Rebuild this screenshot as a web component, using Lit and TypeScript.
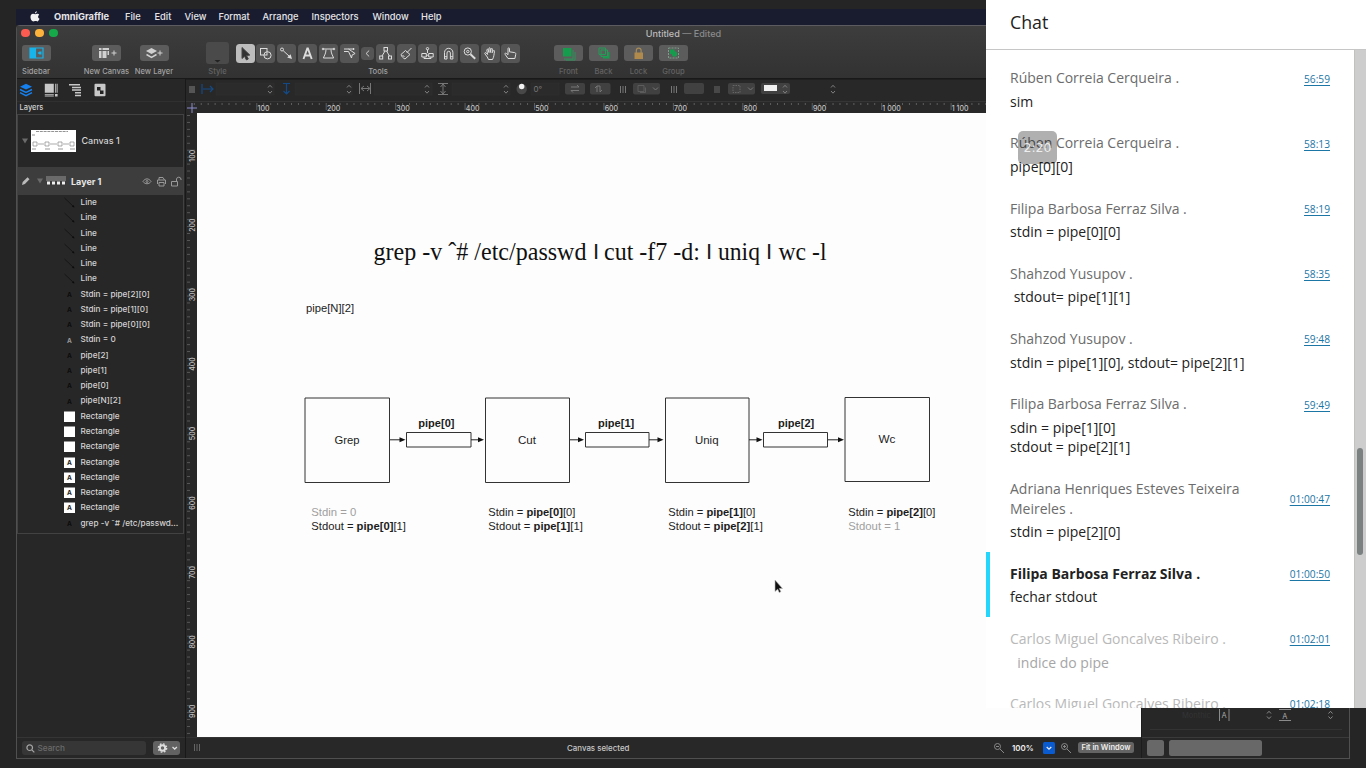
import { LitElement, html, svg, css } from "lit";
import { customElement } from "lit/decorators.js";
import { classMap } from "lit/directives/class-map.js";

const MENUS = ["File", "Edit", "View", "Format", "Arrange", "Inspectors", "Window", "Help"];

/* Drawing tools, each on a 19x19 grid */
const TOOLS = [
  svg`<path d="M6 3.5v11l2.6-2.2 1.8 3.6 1.9-.9-1.8-3.5 3.3-.4z" fill="#333"/>`,
  svg`<rect x="4.500" y="4.500" width="6.500" height="6.500"/><circle cx="11.500" cy="11.300" r="3.600"/>`,
  svg`<circle cx="5" cy="5.500" r="1.500"/><path d="M6.200 6.700L12 12"/><path d="M15 15l-4.800-1.400 3.400-3.400z" fill="#ddd" stroke="none"/>`,
  svg`<path d="M5.500 15L9.300 4.500h.6L13.700 15M7 11.500h5.200" stroke-width="1.900"/>`,
  svg`<path d="M4 5h11M7 5.500c0 4-1.500 5.500-2.600 8.500h10.200c-1.100-3-2.600-4.500-2.600-8.500"/><circle cx="4" cy="5" r=".8"/><circle cx="15" cy="5" r=".8"/>`,
  svg`<path d="M4 5h10.500M4 7.500h4.500l3 6.500.6-3 3-1.500-6.600-4.500M13.500 4v2" />`,
  svg`<path d="M8.300 3.800L5 7l3.300 3.200"/>`,
  svg`<rect x="8" y="3.500" width="3.500" height="3.500"/><rect x="3.700" y="12" width="3" height="3"/><rect x="12.500" y="12" width="3" height="3"/><path d="M9 7l-3 5M10.500 7l3 5"/>`,
  svg`<path d="M14.500 4l-4.500 4.500M8.500 6.500l4.500 4-5 4.500c-2-1-3.500-2.500-4-4.500zM5.500 11l2 2"/>`,
  svg`<path d="M9.500 9V5.500M3.800 9.500h4.500v3.500H3.800zM10.700 9.500h4.500v3.500h-4.500zM8.300 11.200h2.400"/><circle cx="9.500" cy="4.700" r="1.200"/><path d="M6 13v1.500h7V13"/>`,
  svg`<path d="M5.500 15V8.500a4.200 4.200 0 018.400 0V15h-2.500V9a1.700 1.700 0 00-3.400 0v6zM5.500 12.700H8M11.400 12.700h2.500"/>`,
  svg`<circle cx="7.800" cy="7.500" r="3.600"/><circle cx="7.800" cy="7.500" r="1.200"/><path d="M10.500 10.200l4.700 4.600" stroke-width="1.900"/>`,
  svg`<path d="M6.300 13L3.800 9.700c-.4-1 .7-1.500 1.400-.7l1.400 1.500-.8-4.500c0-1 1.200-1.100 1.400-.2l.7 2.700V4.500c0-1 1.400-1 1.400 0v4l.8-3.500c.2-.9 1.500-.7 1.400.3l-.4 3.500 1.100-2c.4-.8 1.500-.4 1.300.5-.5 2.500-.3 5.200-2 8.200H7.500z"/>`,
  svg`<path d="M7 14.500l-3-4.300c-.4-.8.6-1.500 1.300-.8l1.700 1.300V4.600c0-1 1.500-1 1.500 0v3.200l5.200.8c1 .2 1.200 1 1 2l-.8 3.900z"/>`,
];

const layerRows: Array<[string, string]> = [
  ...Array.from({ length: 6 }, () => ["line", "Line"] as [string, string]),
  ["text", "Stdin = pipe[2][0]"],
  ["text", "Stdin = pipe[1][0]"],
  ["text", "Stdin = pipe[0][0]"],
  ["pale", "Stdin = 0"],
  ["text", "pipe[2]"],
  ["text", "pipe[1]"],
  ["text", "pipe[0]"],
  ["text", "pipe[N][2]"],
  ["box", "Rectangle"],
  ["box", "Rectangle"],
  ["box", "Rectangle"],
  ["boxa", "Rectangle"],
  ["boxa", "Rectangle"],
  ["boxa", "Rectangle"],
  ["boxa", "Rectangle"],
  ["text", "grep -v ˆ# /etc/passwd..."],
];

@customElement("mac-toolbar")
class MacToolbar extends LitElement {
  static styles = css`
    :host { display: block; height: 53px; background: linear-gradient(#3d3d3d, #323232); border-top: 1px solid #5b5b60; box-sizing: border-box; font: 500 7.600px Inter, sans-serif; color: #a2a2a2; }
    .title { display: grid; grid-template-columns: 61px 1fr 60px; height: 14px; align-items: center; font-size: 9.100px; color: #8b8b8b; }
    .title p { margin: 0; text-align: center; }
    .title b { font-weight: 500; color: #bdbdbd; }
    .lights { display: flex; gap: 5.400px; padding-left: 4.200px; }
    .lights i { width: 8.600px; height: 8.600px; border-radius: 50%; }
    .red { background: #fc5b52; } .yellow { background: #fdb23c; } .green { background: #16a94a; }
    .row { display: flex; height: 38px; }
    .item { display: flex; flex-direction: column; align-items: center; width: 35px; }
    .item span { line-height: 10px; white-space: nowrap; margin-top: 1px; }
    .face { height: 26px; display: flex; align-items: center; justify-content: center; }
    .btn { width: 29px; height: 16px; border-radius: 3px; background: #5c5c5c; display: block; }
    .well { width: 23px; height: 22px; border-radius: 3px; background: #4a4a4a; display: block; }
    .dim { color: #636363; }
    .sidebar { width: 38px; } .canvas { width: 47px; margin-left: 28px; } .layer { width: 47px; margin-left: .5px; }
    .style { margin-left: 22.500px; } .tools { width: 284px; margin-left: 1px; } .front { margin-left: 31px; }
    .strip { width: 285px; display: flex; justify-content: space-between; align-items: center; height: 26px; }
    .tool { width: 19px; height: 19px; border-radius: 3.500px; background: #555556; fill: none; stroke: #dcdcdc; stroke-width: 1; }
    .active { background: #bdbdbd; stroke: #444; }
    .small { width: 13px; height: 13px; }
  `;
  render() {
    return html`
      <div class="title">
        <div class="lights"><i class="red"></i><i class="yellow"></i><i class="green"></i></div>
        <p><b>Untitled</b> — Edited</p>
      </div>
      <div class="row">
        <div class="item sidebar"><div class="face"><svg class="btn" viewBox="0 0 29 16"><path d="M8 3h5v10H8z" fill="#17b4ea"/><path d="M8 3h13v10H8zM13.500 3v10" fill="none" stroke="#17b4ea" stroke-width="1.200"/><path d="M17.500 6.500h2v3h-2l-2-1.500z" fill="#17b4ea"/></svg></div><span>Sidebar</span></div>
        <div class="item canvas"><div class="face"><svg class="btn" viewBox="0 0 29 16"><path d="M7 3h2.500v2H7zM10.500 3H17v2h-6.500zM7 6h2.500v7H7zM10.500 6h4v7h-4zM15.500 6H17v4h-1.500z" fill="#d0d0d0"/><path d="M19.500 8h5M22 5.500v5" stroke="#d0d0d0"/></svg></div><span>New Canvas</span></div>
        <div class="item layer"><div class="face"><svg class="btn" viewBox="0 0 29 16"><path d="M11.500 3l5.500 3-5.500 3L6 6z" fill="#d0d0d0"/><path d="M6.500 9.500l5 2.800 5-2.800" fill="none" stroke="#d0d0d0" stroke-width="1.500"/><path d="M17.500 8h5M20 5.500v5" stroke="#d0d0d0"/></svg></div><span>New Layer</span></div>
        <div class="item style dim"><div class="face"><svg class="well" viewBox="0 0 23 22"><path d="M8.500 18h6l-3 2.500z" fill="#222"/></svg></div><span>Style</span></div>
        <div class="item tools"><div class="strip">
          ${TOOLS.map((t, i) => html`<svg class=${classMap({ tool: true, active: i === 0, small: i === 6 })} viewBox=${i === 6 ? "0 0 13 14" : "0 0 19 19"}>${t}</svg>`)}
        </div><span>Tools</span></div>
        <div class="item front dim"><div class="face"><svg class="btn" viewBox="0 0 29 16"><path d="M19 5v9h-9M21 7v8h-9" fill="none" stroke="#2b9358"/><path d="M9 3h8.500v8.500H9z" fill="#169c4d"/></svg></div><span>Front</span></div>
        <div class="item dim"><div class="face"><svg class="btn" viewBox="0 0 29 16"><path d="M14 7h6.500v6.500H14z" fill="#169c4d"/><path d="M12 5h6.500v6.500H12zM10 3h6.500v6.500H10z" fill="#5c5c5c" stroke="#239c57"/></svg></div><span>Back</span></div>
        <div class="item dim"><div class="face"><svg class="btn" viewBox="0 0 29 16"><path d="M10.500 7.500h8.500V14h-8.500z" fill="#b08a4c"/><path d="M12.300 8V5.500a2.400 2.400 0 014.800 0V8" fill="none" stroke="#a78a5a" stroke-width="1.200"/></svg></div><span>Lock</span></div>
        <div class="item dim"><div class="face"><svg class="btn" viewBox="0 0 29 16"><path d="M9.500 3h10v10h-10z" fill="none" stroke="#7a9c88" stroke-dasharray="2 1"/><path d="M11 4.500h4.500V9H11z" fill="#169c4d"/><circle cx="15.500" cy="9" r="2.700" fill="#169c4d"/></svg></div><span>Group</span></div>
      </div>`;
  }
}

@customElement("layer-sidebar")
class LayerSidebar extends LitElement {
  static styles = css`
    :host { display: flex; flex-direction: column; background: #272727; border-right: 1px solid #191919; box-sizing: border-box; font: 500 8.200px Inter, sans-serif; color: #d2d2d2; }
    .tabs { height: 21px; display: flex; align-items: center; gap: 10.500px; padding: 0 0 1px 2px; }
    .tabs svg { width: 14px; height: 14px; }
    .heading { height: 13px; line-height: 12px; padding-left: 2.500px; border-top: 1px solid #303030; box-sizing: border-box; font-size: 7.500px; }
    .list { border: 1px solid #424242; height: 420px; box-sizing: border-box; margin-right: 1px; }
    .canvas { height: 52px; display: flex; align-items: center; padding: 0 0 1px 4px; box-sizing: border-box; font-size: 9px; }
    .canvas .thumb { width: 45px; height: 22px; margin: 0 5.500px 0 3px; }
    .arrow { width: 6px; height: 6px; fill: #6b6b6b; }
    .layer { height: 28px; display: flex; align-items: center; background: #3d3d3d; padding-left: 3px; font-size: 9px; font-weight: 700; color: #e6e6e6; }
    .pencil { width: 10px; height: 10px; margin-right: 6px; }
    .mini { width: 20px; height: 10px; margin: 0 5.500px 0 2.500px; }
    .flags { width: 40px; height: 11px; margin-left: auto; margin-right: 1px; }
    .row { height: 15.270px; display: flex; align-items: center; padding-left: 46px; white-space: nowrap; }
    .row svg { width: 11px; height: 11px; margin-right: 5.500px; }
    .row span { margin-top: -1.200px; }
    .grow { flex: 1; }
    .foot { height: 22px; border-top: 1px solid #353535; box-sizing: border-box; display: flex; align-items: center; padding: 0 5px 1px 4.500px; gap: 7px; }
    .search { width: 124px; height: 14px; border-radius: 3px; background: #363636; display: flex; align-items: center; gap: 3px; color: #6b6b6b; }
    .search svg { width: 9px; height: 9px; margin-left: 4px; }
    .gear { width: 27px; height: 14px; border-radius: 3px; background: #626262; }
  `;
  glyph(kind: string) {
    if (kind === "line") return svg`<path d="M.5 1l9 8.500" stroke="#161616"/><path d="M10.500 10.500l-2.600-.8 1.700-1.700z" fill="#0c0c0c"/>`;
    const boxed = kind.startsWith("box");
    return svg`${boxed ? svg`<rect y=".5" width="11" height="10.500" fill="#fff"/>` : ""}
      ${kind === "box" ? "" : svg`<text x="5.500" y="8" text-anchor="middle" font-size="6.500" font-weight="700" fill=${kind === "pale" ? "#999" : boxed ? "#222" : "#0c0c0c"}>A</text>`}`;
  }
  render() {
    return html`
      <div class="tabs">
        <svg viewBox="0 0 14 14" fill="#1680ee"><path d="M7 .8l6 2.900-6 2.900-6-2.900z"/><path d="M1 6.500l6 2.900 6-2.900M1 9.600l6 3 6-3" fill="none" stroke="#1680ee" stroke-width="1.500"/></svg>
        <svg viewBox="0 0 14 14" fill="#c8c8c8"><path d="M.8.8h9v9h-9zM11 .8h.8v9H11zM12.600.8h1v9h-1zM.8 11h9v.8h-9zM.8 12.600h9v1h-9zM11 11h2.600v2.600H11z"/></svg>
        <svg viewBox="0 0 14 14" fill="#c8c8c8"><path d="M1 1h11v1.500H1zM4 3.700h9v1.500H4zM4 6.300h9v1.500H4zM7 9h6v1.500H7zM7 11.800h6v1.500H7z"/></svg>
        <svg viewBox="0 0 14 14"><rect x="1.500" y=".8" width="11" height="12.500" rx="1" fill="#c8c8c8"/><path d="M4 4h3.500v3.500H4zM7 7.500h3.500V11H7z" fill="#222"/></svg>
      </div>
      <div class="heading">Layers</div>
      <div class="list">
        <div class="canvas">
          <svg class="arrow" viewBox="0 0 6 6"><path d="M0 .5h6L3 5.500z"/></svg>
          <svg class="thumb" viewBox="0 0 45 22"><path d="M0 0h45v22H0z" fill="#fff"/><path d="M5 1.500h32M1 5h3" stroke="#777" stroke-width=".8" stroke-dasharray="3 .8"/><path d="M2 12h4v4H2zM14 12h4v4h-4zM27 12h4v4h-4zM39 12h4v4h-4zM7 14h6M19 14h7M32 14h6" fill="none" stroke="#888" stroke-width=".7"/><path d="M1 19h4M14 19h5M27 19h5M39 19h5" stroke="#999"/></svg>
          Canvas 1
        </div>
        <div class="layer">
          <svg class="pencil" viewBox="0 0 10 10"><path d="M1 9l.7-3L6.500 1.200l2 2L3.900 8z" fill="#bbb"/></svg>
          <svg class="arrow" viewBox="0 0 6 6"><path d="M0 .5h6L3 5.500z"/></svg>
          <svg class="mini" viewBox="0 0 20 10"><path d="M0 0h20v5H0z" fill="#6a6a6a"/><path d="M0 5h20v4.500H0z" fill="#3a3a3a"/><path d="M1 5.500h3v3H1zM6 5.500h3v3H6zM11 5.500h3v3h-3zM16 5.500h3v3h-3z" fill="#eee"/></svg>
          Layer 1
          <svg class="flags" viewBox="0 0 40 11" fill="none" stroke="#999"><path d="M1 5.500c2-3.500 6-3.500 8 0-2 3-6 3-8 0z"/><circle cx="5" cy="5.500" r="1"/><path d="M17 4V1.500h4l1.500 2.500M15.500 8V4h8v4M17 6.500h5v3.500h-5z"/><path d="M29.500 5.500h6v4.500h-6zM34.500 5.500V3a2.300 2.300 0 014.500 0v1"/></svg>
        </div>
        ${layerRows.map(([kind, label]) => html`<div class="row"><svg viewBox="0 0 11 11">${this.glyph(kind)}</svg><span>${label}</span></div>`)}
      </div>
      <div class="grow"></div>
      <div class="foot">
        <div class="search"><svg viewBox="0 0 9 9" fill="none" stroke="#a5a5a5" stroke-width="1.200"><circle cx="3.700" cy="3.700" r="2.800"/><path d="M5.800 5.800L8.300 8.300"/></svg>Search</div>
        <svg class="gear" viewBox="0 0 27 14"><circle cx="9.500" cy="7" r="2.700" fill="none" stroke="#ddd" stroke-width="2"/><circle cx="9.500" cy="7" r="4.200" fill="none" stroke="#ddd" stroke-width="1.300" stroke-dasharray="1.700 1.600"/><path d="M19.500 6l2.200 2 2.200-2" fill="none" stroke="#ddd" stroke-width="1.300"/></svg>
      </div>`;
  }
}

const UNIT = 69.43;
const stepper = (x: number) => svg`<path d=${`M${x - 2} 87.500l2-2.200 2 2.200M${x - 2} 91l2 2.200 2-2.200`} fill="none" stroke="#808080"/>`;
const field = (x: number, w: number) => svg`<rect x=${x} y="83" width=${w} height="12" fill="#2b2b2b" stroke="#303030" stroke-width=".6"/>`;

@customElement("graffle-canvas")
class GraffleCanvas extends LitElement {
  static styles = css`
    :host { display: grid; grid-template: 22px 12px 1fr 22px / 11px 1fr; background: #282828; font-family: Inter, sans-serif; }
    svg { display: block; width: 100%; height: 100%; }
    .inspector { grid-column: 1 / 3; }
    .hruler { grid-column: 1 / 3; }
    .sheet { background: #fdfdfd; }
    .sans { font-family: "Liberation Sans", Arial, sans-serif; font-size: 11.200px; fill: #1c1c1c; }
    .serif { font-family: "Liberation Serif", Times, serif; font-size: 24.500px; fill: #111; }
    .bar { font-family: "Liberation Sans", Arial, sans-serif; font-size: 16.500px; font-weight: 700; fill: #1c1c1c; }
    .mute { fill: #a0a0a0; }
    .b { font-weight: 700; }
    .rule { font-size: 7px; font-weight: 500; fill: #c4c4c4; }
    .status { grid-column: 1 / 3; display: grid; grid-template-columns: 371px 1fr 31px 12px 5px 12px 6px 56px 7px; align-items: center; font-size: 7.900px; font-weight: 500; color: #c9c9c9; border-top: 1px solid #333; box-sizing: border-box; white-space: nowrap; padding-bottom: 1.500px; }
    .status svg { width: 12px; height: 12px; }
    .status .grip { margin-left: 7px; width: 8px; }
    .sel { display: flex; justify-content: space-between; padding: 0 7px 0 10px; align-items: center; }
    .pct { color: #eee; font-weight: 600; }
    .in { grid-column: 6; }
    .fit { grid-column: 8; background: #646464; border-radius: 2.500px; height: 11px; line-height: 11px; text-align: center; color: #eee; font-weight: 600; font-size: 7.500px; }
  `;
  arrow(x1: number, x2: number) {
    return svg`<path d=${`M${x1} 439.800H${x2 - 5}`} stroke="#222"/><path d=${`M${x2} 439.800l-6-2.500v5z`} fill="#111"/>`;
  }
  io(x: number, y: number, name: string, bold: string, tail: string, w: number) {
    return svg`<text class="sans" x=${x} y=${y} textLength=${w} lengthAdjust="spacingAndGlyphs">${name} = <tspan class="b">${bold}</tspan>${tail}</text>`;
  }
  word(x: number, y: number, w: number, t: string, cls = "sans") {
    return svg`<text class=${cls} x=${x} y=${y} textLength=${w} lengthAdjust="spacingAndGlyphs">${t}</text>`;
  }
  render() {
    const hTicks = Array.from({ length: 136 }, (_, i) => 194.300 + (i * UNIT) / 10);
    const vTicks = Array.from({ length: 90 }, (_, i) => 115.500 + (i * UNIT) / 10);
    const hundreds = Array.from({ length: 11 }, (_, i) => i + 1);
    return html`
      <svg class="inspector" viewBox="186 79 955 22">
        <path d="M186 79.500h955" stroke="#1f1f1f"/>
        <path d="M189 86h6v7h-6z" fill="#555"/>
        <path d="M202 84v10M203 89h10M210 86l3 3-3 3M283 83.500h7M286.500 84v10M283.500 91l3 3 3-3" fill="none" stroke="#134a86" stroke-width="1.200"/>
        ${[[216, 58], [295, 57], [374, 58], [452, 58]].map(([x, w]) => field(x, w))}
        ${[270, 349, 427, 506, 833].map(stepper)}
        <path d="M359.500 83v11M370.500 83v11M361 88.500h8M364 86l-3 2.500 3 2.500M367 86l3 2.500-3 2.500M438 83.500h10M438 94.500h10M443 84v10M440.500 87l2.500-3 2.500 3M440.500 91l2.500 3 2.500-3" fill="none" stroke="#777"/>
        <circle cx="521.700" cy="89" r="5.200" fill="#484848"/><circle cx="521.700" cy="86.500" r="2.700" fill="#f3f3f3"/>
        ${field(531, 28)}<text x="533.500" y="92" font-size="8" fill="#777">0°</text>
        <g fill="#414141"><rect x="565" y="83" width="20" height="11.500" rx="2"/><rect x="590" y="83" width="20.500" height="11.500" rx="2"/><rect x="633" y="83" width="27" height="11.500" rx="2"/><rect x="684" y="83" width="20" height="11" rx="2"/><rect x="728" y="83" width="27" height="11.500" rx="2"/><rect x="761" y="83" width="29" height="11" rx="2"/></g>
        <path d="M571 87h8l-2-2M579 90.500h-8l2 2M597 92v-6l-2 2M597 86h3v6l2-2" fill="none" stroke="#777"/><path d="M638 85.500h6v6h-6zM640 92.500h5.500v-5" fill="none" stroke="#5c5c5c"/>
        <path d="M620.500 86v7M623 86v7M625.500 86v7M671.500 86v7M674 86v7M676.500 86v7" stroke="#777"/>
        <path d="M653 87.500l2.500 2.500 2.500-2.500M748 87.500l2.500 2.500 2.500-2.500" fill="none" stroke="#777"/>
        <path d="M714 86h6v7h-6z" fill="#484848"/><path d="M733 85.500h7v7h-7z" fill="none" stroke="#666" stroke-dasharray="1.500 1"/>
        <path d="M764 85h13v6h-13z" fill="#f0f0f0"/>${stepper(785)}
      </svg>
      <svg class="hruler" viewBox="186 101 955 12">
        <path d="M186 101h955v12H186z" fill="#292929"/><path d="M186 101.500h955" stroke="#353535"/>
        ${hTicks.map((x, i) => svg`<path d=${`M${x} 103v${i % 10 === 9 ? 7 : 2}`} stroke="#646464" stroke-width=".9"/>`)}
        ${hundreds.map((n) => svg`<text class="rule" x=${257.500 + (n - 1) * UNIT} y="110.500">${n > 9 ? `1 ${n === 10 ? "000" : "100"}` : n * 100}</text>`)}
        <path d="M187 108h10M192 103v10" stroke="#8c8ccf"/>
      </svg>
      <svg viewBox="186 113 11 624">
        ${vTicks.map((y, i) => svg`<path d=${`M187 ${y}h${i % 10 === 5 ? 8 : 3}`} stroke="#5d5d5d" stroke-width=".9"/>`)}
        ${hundreds.slice(0, 9).map((n) => { const y = 155.700 + (n - 1) * 69.450; return svg`<text class="rule" text-anchor="middle" transform=${`translate(195.300 ${y}) rotate(-90)`}>${n * 100}</text>`; })}
      </svg>
      <svg class="sheet" viewBox="197 113 944 624">
        ${this.word(373.500, 259.500, 213, "grep -v ˆ# /etc/passwd", "serif")}
        ${this.word(604, 259.500, 96, "cut -f7 -d:", "serif")}
        ${this.word(718, 259.500, 42, "uniq", "serif")}
        ${this.word(778.500, 259.500, 48, "wc -l", "serif")}
        ${[593.800, 706.800, 766.800].map((x) => svg`<text class="bar" x=${x} y="255.500">|</text>`)}
        ${this.word(306, 312, 48, "pipe[N][2]")}
        <g fill="none" stroke="#333"><path d="M305 398h84.500v84.500H305zM485.500 398h84v84.500h-84zM665.500 398h83.500v84.500h-83.500zM845 397.500h84.500v84H845z"/><path d="M406.500 432.500h64.500v14.500h-64.500zM585.500 432.500h63.500v14.500h-63.500zM763.500 432.500h64v14.500h-64z"/></g>
        ${[[390, 405.500], [471, 484], [570, 584], [649, 663.500], [749, 762.500], [828, 844]].map(([a, b]) => this.arrow(a, b))}
        ${this.word(334.500, 443.500, 25, "Grep")}${this.word(518, 443.500, 18, "Cut")}${this.word(695, 443.500, 23.500, "Uniq")}${this.word(878.500, 443, 17, "Wc")}
        ${[418.300, 598, 778].map((x, i) => this.word(x, 427, 36.200, `pipe[${i}]`, "sans b"))}
        ${this.word(311.300, 516, 45, "Stdin = 0", "sans mute")}
        ${this.io(311.300, 530, "Stdout", "pipe[0]", "[1]", 94.700)}
        ${this.io(488.300, 516.400, "Stdin", "pipe[0]", "[0]", 87)}${this.io(488.300, 530.400, "Stdout", "pipe[1]", "[1]", 94.500)}
        ${this.io(668.300, 516.400, "Stdin", "pipe[1]", "[0]", 87)}${this.io(668.300, 530.400, "Stdout", "pipe[2]", "[1]", 94.500)}
        ${this.io(848.300, 516.400, "Stdin", "pipe[2]", "[0]", 87)}
        ${this.word(848.300, 530, 52, "Stdout = 1", "sans mute")}
        <path d="M775 580v11.500l2.700-2.300 1.500 3.400 1.700-.8-1.600-3.300h3.200z" fill="#111" stroke="#bbb" stroke-width=".6"/>
      </svg>
      <div class="status">
        <svg class="grip" viewBox="0 0 8 12"><path d="M1.500 2v7M4 2v7M6.500 2v7" stroke="#666"/></svg>
        <div class="sel"><span>Canvas selected</span><svg viewBox="0 0 12 12" fill="none" stroke="#888"><circle cx="4.500" cy="4.500" r="3"/><path d="M7 7l4 4M3 4.500h3"/></svg></div>
        <span class="pct">100%</span>
        <svg viewBox="0 0 12 12"><rect width="12" height="12" rx="1.500" fill="#0a5bd0"/><path d="M3.700 5L6 7.200 8.300 5" fill="none" stroke="#eee" stroke-width="1.200"/></svg>
        <svg class="in" viewBox="0 0 12 12" fill="none" stroke="#888"><circle cx="4.500" cy="4.500" r="3"/><path d="M7 7l4 4M3 4.500h3M4.500 3v3"/></svg>
        <span class="fit">Fit in Window</span>
      </div>`;
  }
}

type Message = { who: string; at: string; text: string; state?: string };
const MESSAGES: Message[] = [
  { who: "Rúben Correia Cerqueira .", at: "56:59", text: "sim" },
  { who: "Rúben Correia Cerqueira .", at: "58:13", text: "pipe[0][0]" },
  { who: "Filipa Barbosa Ferraz Silva .", at: "58:19", text: "stdin = pipe[0][0]" },
  { who: "Shahzod Yusupov .", at: "58:35", text: " stdout= pipe[1][1]" },
  { who: "Shahzod Yusupov .", at: "59:48", text: "stdin = pipe[1][0], stdout= pipe[2][1]" },
  { who: "Filipa Barbosa Ferraz Silva .", at: "59:49", text: "sdin = pipe[1][0]\nstdout = pipe[2][1]" },
  { who: "Adriana Henriques Esteves Teixeira Meireles .", at: "01:00:47", text: "stdin = pipe[2][0]" },
  { who: "Filipa Barbosa Ferraz Silva .", at: "01:00:50", text: "fechar stdout", state: "now" },
  { who: "Carlos Miguel Goncalves Ribeiro .", at: "01:02:01", text: "  indice do pipe", state: "later" },
  { who: "Carlos Miguel Goncalves Ribeiro .", at: "01:02:18", text: "", state: "later" },
];

@customElement("chat-panel")
class ChatPanel extends LitElement {
  static styles = css`
    :host { display: flex; flex-direction: column; background: #fff; overflow: hidden; font: 14px/19.600px "Open Sans", "Noto Sans", sans-serif; color: #222; }
    header { height: 50px; flex: none; box-sizing: border-box; border-bottom: 1px solid #c6c6c6; padding: 0 24px; font-size: 17.800px; line-height: 45px; }
    .body { flex: 1; min-height: 0; display: grid; grid-template-columns: 1fr 12px; }
    .log { overflow: hidden; padding-top: 6.300px; position: relative; }
    .msg { padding: 12px 24px 10px; box-sizing: border-box; }
    .top { display: flex; align-items: center; justify-content: space-between; gap: 24px; margin-bottom: 4px; }
    .who { color: #6c6c6c; }
    .at { font-size: 10.200px; line-height: 17px; padding-top: 1px; margin-bottom: -1px; color: #1b75a5; text-decoration: underline; text-underline-offset: 2px; }
    .text { white-space: pre-wrap; }
    .now { border-left: 4px solid #24d6fb; padding-left: 20px; }
    .now .who { font-weight: 700; color: #222; }
    .later .who { color: #b9b9b9; } .later .text { color: #a6a6a6; }
    .track { background: #cdcdcd; border-left: 1px solid #c2c2bd; box-sizing: border-box; padding: 398px 0 0 2px; }
    .thumb { width: 6px; height: 107px; border-radius: 3px; background: #7b8181; }
    .clock { position: absolute; left: 32px; top: 81px; width: 39px; height: 33px; border-radius: 5px; background: rgba(0, 0, 0, .31); color: #eee; text-align: center; line-height: 33px; font-family: "DejaVu Sans", sans-serif; font-size: 12.500px; }
  `;
  render() {
    return html`
      <header>Chat</header>
      <div class="body">
        <div class="log">
          ${MESSAGES.map((m) => html`<div class="msg ${m.state ?? ""}"><div class="top"><span class="who">${m.who}</span><a class="at">${m.at}</a></div><div class="text">${m.text}</div></div>`)}
          <div class="clock">2:20</div>
        </div>
        <div class="track"><div class="thumb"></div></div>
      </div>`;
  }
}

@customElement("app-root")
class AppRoot extends LitElement {
  static styles = css`
    :host { display: block; position: relative; width: 1366px; height: 768px; overflow: hidden; background: #252525; box-sizing: border-box; padding: 9px 16px; }
    .menubar { height: 16px; background: #191c2f; display: grid; grid-template-columns: 22px 71px 29.500px 30px 34px 44px 49px 61px 48.500px 30px; padding: 0 0 1px 16px; box-sizing: border-box; align-items: center; font: 500 9.300px Inter, sans-serif; color: #e6e6e9; white-space: nowrap; }
    .menubar b { font-weight: 700; }
    .apple { width: 10px; height: 11px; margin-left: -2px; fill: #f2f2f2; }
    .window { height: 734px; box-sizing: border-box; border: solid #505050; border-width: 0 1px 1px; border-radius: 4px 4px 0 0; overflow: hidden; }
    .cols { display: grid; grid-template-columns: 169px 955px 1fr; height: 680px; border-top: 1px solid #191919; box-sizing: border-box; }
    .right { background: #272727; display: flex; flex-direction: column; justify-content: flex-end; border-left: 1px solid #1c1c1c; }
    .metrics { height: 29px; }
    .foot { height: 22px; border-top: 1px solid #3a3a3a; box-sizing: border-box; display: flex; align-items: center; gap: 5px; padding: 0 0 1px 5px; }
    .foot i { height: 16px; border-radius: 2.500px; background: #686868; }
    .one { width: 17px; } .two { width: 93px; }
    chat-panel { position: absolute; left: 986px; top: 0; width: 380px; height: 708px; }
  `;
  render() {
    return html`
      <div class="menubar">
        <svg class="apple" viewBox="0 0 10 11"><path d="M6.900.3C6.900 1.500 6 2.400 4.900 2.400 4.900 1.300 5.800.4 6.900.3zM9.200 3.800c-1.700 1.100-1.400 3.300.3 4-.5 1.300-1.300 2.700-2.200 2.700-.8 0-1-.4-1.900-.4s-1.200.4-2 .4C1.800 10.500.4 7.900.5 5.800.6 3.800 1.700 2.800 3 2.700c.9 0 1.500.5 2.200.5s1.400-.6 2.400-.5c.7.1 1.200.4 1.600 1.100z"/></svg>
        <b>OmniGraffle</b>${MENUS.map((m) => html`<span>${m}</span>`)}
      </div>
      <div class="window">
        <mac-toolbar></mac-toolbar>
        <div class="cols">
          <layer-sidebar></layer-sidebar>
          <graffle-canvas></graffle-canvas>
          <div class="right">
            <svg class="metrics" viewBox="1142 708 208 29" font-family="Inter, sans-serif">
              <text x="1182" y="718" font-size="7.500" fill="#343434">Monthic</text>
              <g fill="none" stroke="#8b8b8b"><path d="M1219.500 709v12M1229 709v12M1279 709.500h12M1279 720.500h12"/><path d="M1267 713.500l2-2.200 2 2.200M1267 716.500l2 2.200 2-2.200M1328.500 713.500l2-2.200 2 2.200M1328.500 716.500l2 2.200 2-2.200"/></g>
              <text x="1221.500" y="718" font-size="7.500" fill="#aaa">A</text><text x="1282.300" y="718.500" font-size="7.500" fill="#aaa">A</text>
              <path d="M1150 729.500h192" stroke="#333"/>
            </svg>
            <div class="foot"><i class="one"></i><i class="two"></i></div>
          </div>
        </div>
      </div>
      <chat-panel></chat-panel>`;
  }
}
